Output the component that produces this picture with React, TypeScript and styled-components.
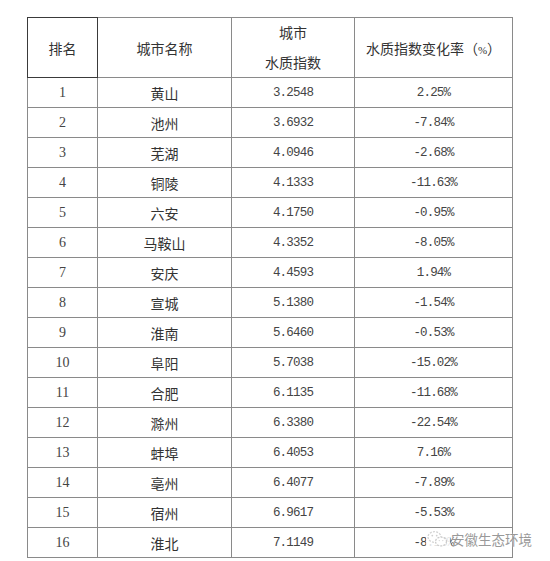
import styled, { createGlobalStyle } from "styled-components";

const GlobalStyle = createGlobalStyle`
  html, body {
    margin: 0;
    padding: 0;
    background: #ffffff;
  }
  body {
    font-family: "Noto Sans CJK SC", "Noto Sans", sans-serif;
  }
`;

interface Row {
  rank: number;
  city: string;
  index: string;
  change: string;
}

const rows: Row[] = [
  { rank: 1, city: "黄山", index: "3.2548", change: "2.25%" },
  { rank: 2, city: "池州", index: "3.6932", change: "-7.84%" },
  { rank: 3, city: "芜湖", index: "4.0946", change: "-2.68%" },
  { rank: 4, city: "铜陵", index: "4.1333", change: "-11.63%" },
  { rank: 5, city: "六安", index: "4.1750", change: "-0.95%" },
  { rank: 6, city: "马鞍山", index: "4.3352", change: "-8.05%" },
  { rank: 7, city: "安庆", index: "4.4593", change: "1.94%" },
  { rank: 8, city: "宣城", index: "5.1380", change: "-1.54%" },
  { rank: 9, city: "淮南", index: "5.6460", change: "-0.53%" },
  { rank: 10, city: "阜阳", index: "5.7038", change: "-15.02%" },
  { rank: 11, city: "合肥", index: "6.1135", change: "-11.68%" },
  { rank: 12, city: "滁州", index: "6.3380", change: "-22.54%" },
  { rank: 13, city: "蚌埠", index: "6.4053", change: "7.16%" },
  { rank: 14, city: "亳州", index: "6.4077", change: "-7.89%" },
  { rank: 15, city: "宿州", index: "6.9617", change: "-5.53%" },
  { rank: 16, city: "淮北", index: "7.1149", change: "-8.13%" },
];

// the faint two-bubble chat mark of the watermark
function WeChatMark() {
  return (
    <svg width="24" height="18" viewBox="0 0 24 18" fill="none">
      <rect x="0" y="0" width="24" height="18" fill="#ffffff" opacity="0.85" />
      <ellipse cx="8.5" cy="7" rx="6.5" ry="5.3" stroke="#d4d4d4" strokeWidth="1.3" strokeDasharray="2 1.2" fill="#ffffff" />
      <ellipse cx="15" cy="11.5" rx="5.5" ry="4.4" stroke="#cccccc" strokeWidth="1.3" strokeDasharray="2 1.2" fill="#ffffff" />
      <circle cx="6.3" cy="5.6" r="0.9" fill="#cfcfcf" />
      <circle cx="10.7" cy="5.6" r="0.9" fill="#cfcfcf" />
      <circle cx="13.3" cy="10.6" r="0.7" fill="#d6d6d6" />
      <circle cx="16.8" cy="10.6" r="0.7" fill="#d6d6d6" />
    </svg>
  );
}

export default function App() {
  return (
    <S.Page>
      <GlobalStyle />
      <S.Frame>
        <S.Table>
          <colgroup>
            <col style={{ width: 70 }} />
            <col style={{ width: 134 }} />
            <col style={{ width: 123 }} />
            <col style={{ width: 158 }} />
          </colgroup>
          <thead>
            <tr>
              <S.HeadCell $dark>排名</S.HeadCell>
              <S.HeadCell>城市名称</S.HeadCell>
              <S.HeadCell>
                <S.HeadLines>
                  城市
                  <br />
                  水质指数
                </S.HeadLines>
              </S.HeadCell>
              <S.HeadCell>
                水质指数变化率（<S.Small>%</S.Small>）
              </S.HeadCell>
            </tr>
          </thead>
          <tbody>
            {rows.map((r) => (
              <tr key={r.rank}>
                <S.RankCell>{r.rank}</S.RankCell>
                <S.CityCell>{r.city}</S.CityCell>
                <S.NumCell>{r.index}</S.NumCell>
                <S.NumCell>{r.change}</S.NumCell>
              </tr>
            ))}
          </tbody>
        </S.Table>
        <S.Watermark>
          <WeChatMark />
          <S.WatermarkText>安徽生态环境</S.WatermarkText>
        </S.Watermark>
      </S.Frame>
    </S.Page>
  );
}

const S = {
  Page: styled.div`
    width: 550px;
    height: 561px;
    padding: 17px 0 0 27px;
    box-sizing: border-box;
    background: #ffffff;
  `,
  Frame: styled.div`
    position: relative;
    width: 486px;
  `,
  Table: styled.table`
    border-collapse: collapse;
    table-layout: fixed;
    width: 486px;
    color: #333333;
  `,
  HeadCell: styled.th<{ $dark?: boolean }>`
    height: 59px;
    padding: 0;
    border: 1px solid ${({ $dark }) => ($dark ? "#3a3a3a" : "#8a8a8a")};
    font-weight: normal;
    font-size: 14px;
    text-align: center;
    vertical-align: middle;
    color: #333333;
  `,
  HeadLines: styled.div`
    line-height: 30px;
    margin-top: -1px;
  `,
  Small: styled.span`
    font-family: "Liberation Serif", serif;
    font-size: 11px;
  `,
  RankCell: styled.td`
    height: 29px;
    padding: 0;
    border: 1px solid #8a8a8a;
    text-align: center;
    font-family: "Liberation Serif", serif;
    font-size: 14px;
    color: #444444;
  `,
  CityCell: styled.td`
    height: 29px;
    padding: 0;
    border: 1px solid #8a8a8a;
    text-align: center;
    font-size: 14px;
    color: #333333;
  `,
  NumCell: styled.td`
    height: 29px;
    padding: 0;
    border: 1px solid #8a8a8a;
    text-align: center;
    font-family: "Liberation Mono", monospace;
    font-size: 12.5px;
    letter-spacing: -0.8px;
    color: #444444;
  `,
  Watermark: styled.div`
    position: absolute;
    left: 399px;
    bottom: 10px;
    display: flex;
    align-items: center;
    gap: 1px;
  `,
  WatermarkText: styled.span`
    font-size: 13.5px;
    line-height: 18px;
    color: #999999;
    white-space: nowrap;
    text-shadow: 0 0 2px #ffffff;
  `,
};
